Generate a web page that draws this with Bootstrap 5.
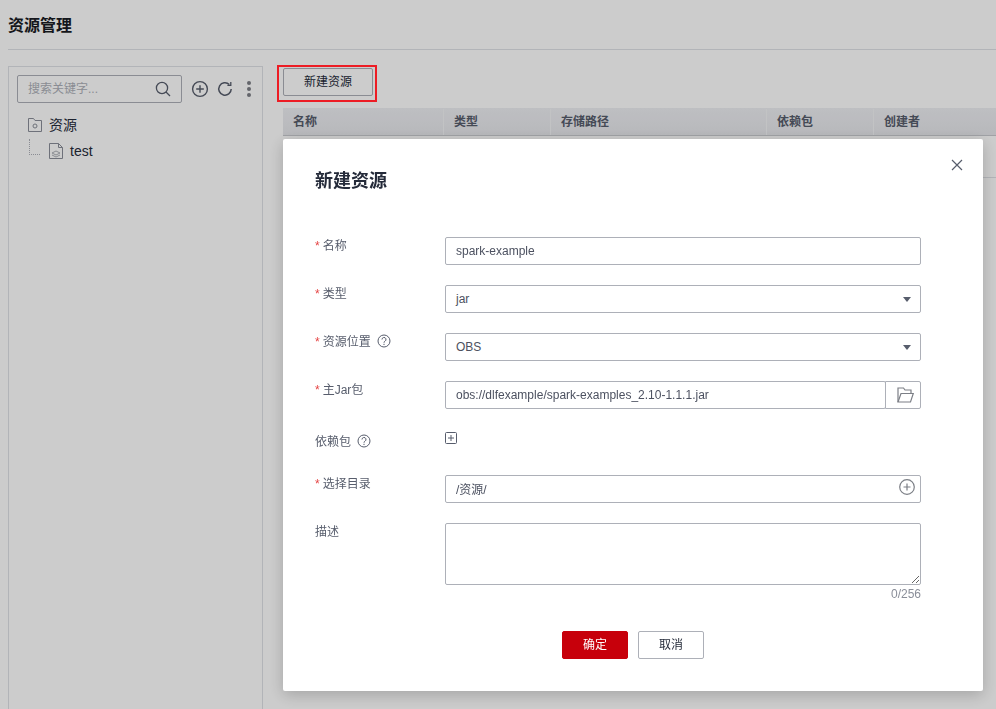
<!DOCTYPE html>
<html lang="zh">
<head>
<meta charset="utf-8">
<title>资源管理</title>
<link rel="stylesheet" href="https://cdn.jsdelivr.net/npm/bootstrap@5.3.0/dist/css/bootstrap.min.css">
<style>
html,body{height:100%;overflow:hidden}
body{font-family:"Liberation Sans","Noto Sans CJK SC",sans-serif;font-size:12px;color:#252b3a;background:#fff}
.page-wrap{padding:0 0 0 8px;height:709px;overflow:hidden}
.page-title{font-size:16px;font-weight:700;line-height:24px;margin:0;padding-top:14px;height:49px;color:#191c24}
.page-rule{height:1px;background:#dfe1e6;margin-bottom:16px}
.tree-panel{width:255px;height:700px;border:1px solid #dfe1e6;flex:none;padding:8px}
.search-box{width:165px;height:28px;border:1px solid #adb0b8;border-radius:2px;padding:0 10px;color:#adb0b8;line-height:26px}
.tree-row{font-size:14px;line-height:20px;color:#252b3a}
.tree-row-a{margin:12px 0 0 11px;gap:7px}
.tree-row-b{margin:6px 0 0 12px}
.tree-dots{width:11px;height:16px;border-left:1px dotted #adb0b8;border-bottom:1px dotted #adb0b8;margin:-8px 9px 0 0}
.doc-mark{margin-right:7px}
.main-area{padding:2px 0 0 20px;flex:1;min-width:0}
.ghost-btn{width:90px;height:28px;border:1px solid #adb0b8;border-radius:2px;background:#fff;font-size:12px;color:#252b3a;padding:0}
.head-row{height:28px;margin-top:12px;background:linear-gradient(#eeeff3,#e6e7eb);border-bottom:1px solid #c8cacf;font-weight:700;color:#575d6c;line-height:27px;padding-top:1px}
.head-cell{padding-left:10px;border-right:1px solid #f3f4f6;flex:none}
.data-row{height:42px;border-bottom:1px solid #dfe1e6}
.veil{position:fixed;inset:0;background:rgba(0,0,0,.2);z-index:10}
.mark-box{position:fixed;left:277px;top:65px;width:100px;height:37px;border:2px solid #ed1c24;z-index:20}
.dlg{position:fixed;left:283px;top:139px;width:700px;height:552px;background:#fff;border-radius:2px;box-shadow:0 4px 16px rgba(0,0,0,.2);z-index:30;padding:30px 62px 0 32px}
.dlg-title{font-size:18px;font-weight:700;line-height:24px;margin:0 0 44px;color:#252b3a}
.dlg-x{position:absolute;right:20px;top:20px;width:12px;height:12px;padding:0;border:0;background:none;display:flex}
.f-row{display:flex;margin-bottom:20px}
.f-label{width:130px;flex:none;line-height:18px;color:#575d6c}
.f-label-low{padding-top:4px}
.req{color:#e54545;margin-right:3px}
.f-input.form-control,.f-input.form-select{height:28px;min-height:28px;font-size:12px;color:#4c5160;border:1px solid #adb0b8;border-radius:2px;padding:0 10px;line-height:26px;box-shadow:none;background-color:#fff}
.f-input.form-select{background-image:none}
.f-input.f-dir{padding-bottom:2px}
.f-field{flex:1;position:relative;min-width:0}
.f-add{height:26px;padding-top:3px}
.caret-mark{position:absolute;right:10px;top:12px;width:0;height:0;border:4.5px solid transparent;border-top:5px solid #575d6c;border-bottom:0}
.in-icon{position:absolute;right:6px;top:4px;display:flex}
.folder-btn{flex:none;width:36px;justify-content:flex-end;padding-right:6px;margin-left:-1px;display:flex;align-items:center;border:1px solid #adb0b8;border-radius:0 2px 2px 0;background:#fff;height:28px}
.f-area.form-control{height:62px;border:1px solid #adb0b8;border-radius:2px;font-size:12px;box-shadow:none}
.count-note{text-align:right;color:#8a8e99;line-height:18px;margin:0;font-size:12px}
.f-row-last{margin-bottom:0}
.foot-row{display:flex;justify-content:center;gap:10px;margin-top:28px;padding-left:30px}
.ok-btn,.no-btn{width:66px;height:28px;border-radius:2px;font-size:12px;padding:0;line-height:26px}
.ok-btn.btn{background:#c7000b;border:1px solid #c7000b;color:#fff}
.no-btn.btn{background:#fff;border:1px solid #adb0b8;color:#252b3a}
.help-mark{margin-left:6px;vertical-align:-2px}
.plus-mark{margin-left:9px}
.refresh-mark{margin-left:8px}
.kebab-mark{margin-left:13px}
</style>
</head>
<body>
<div class="page-wrap">
  <h1 class="page-title">资源管理</h1>
  <div class="page-rule"></div>
  <div class="d-flex">
    <aside class="tree-panel">
      <div class="d-flex align-items-center">
        <div class="search-box d-flex align-items-center justify-content-between">
          <span>搜索关键字...</span>
          <svg width="16" height="16" viewBox="0 0 16 16" fill="none" stroke="#575d6c" stroke-width="1.3"><circle cx="7" cy="7" r="5.6"/><path d="M11 11l4 4"/></svg>
        </div>
        <svg class="plus-mark" width="18" height="18" viewBox="0 0 18 18" fill="none" stroke="#575d6c" stroke-width="1.4"><circle cx="9" cy="9" r="7.4"/><path d="M5.2 9h7.600M9 5.200v7.600"/></svg>
        <svg class="refresh-mark" width="16" height="16" viewBox="0 0 16 16" fill="none" stroke="#575d6c" stroke-width="1.5"><path d="M14.2 8a6.2 6.2 0 1 1-1.9-4.5"/><path d="M13.8.9v3.4h-3.4" stroke-width="1.3"/></svg>
        <svg class="kebab-mark" width="6" height="18" viewBox="0 0 6 18" fill="#7c7f86"><circle cx="3" cy="3" r="2"/><circle cx="3" cy="9" r="2"/><circle cx="3" cy="15" r="2"/></svg>
      </div>
      <div class="tree-row tree-row-a d-flex align-items-center">
        <svg width="14" height="14" viewBox="0 0 14 14" fill="none" stroke="#8a8e99"><path d="M.5 13.5V.5h5l1.5 2h6.500v11z"/><circle cx="7" cy="8" r="2"/></svg>
        <span>资源</span>
      </div>
      <div class="tree-row tree-row-b d-flex align-items-center">
        <span class="tree-dots"></span>
        <svg class="doc-mark" width="14" height="16" viewBox="0 0 14 16" fill="none" stroke="#8a8e99"><path d="M.5.500h9l4 4v11H.5z"/><path d="M9.500.5v4h4"/><path d="M3 10l4-2 4 2-4 2zM3 12l4 2 4-2" stroke="#adb0b8"/></svg>
        <span>test</span>
      </div>
    </aside>
    <main class="main-area">
      <button class="ghost-btn" type="button">新建资源</button>
      <div class="head-row d-flex">
        <div class="head-cell" style="width:161px">名称</div>
        <div class="head-cell" style="width:107px">类型</div>
        <div class="head-cell" style="width:216px">存储路径</div>
        <div class="head-cell" style="width:107px">依赖包</div>
        <div class="head-cell border-0" style="width:122px">创建者</div>
      </div>
      <div class="data-row"></div>
    </main>
  </div>
</div>

<div class="veil"></div>
<div class="mark-box"></div>

<div class="dlg">
  <button class="dlg-x" type="button" aria-label="关闭">
    <svg width="12" height="12" viewBox="0 0 12 12" stroke="#575d6c" stroke-width="1.200"><path d="M1 1l10 10M11 1L1 11"/></svg>
  </button>
  <h2 class="dlg-title">新建资源</h2>
  <form>
    <div class="f-row">
      <div class="f-label"><span class="req">*</span>名称</div>
      <div class="f-field"><input class="form-control f-input" value="spark-example"></div>
    </div>
    <div class="f-row">
      <div class="f-label"><span class="req">*</span>类型</div>
      <div class="f-field"><div class="form-select f-input">jar</div><span class="caret-mark"></span></div>
    </div>
    <div class="f-row">
      <div class="f-label"><span class="req">*</span>资源位置<svg class="help-mark" width="14" height="14" viewBox="0 0 14 14" fill="none" stroke="#575d6c"><circle cx="7" cy="7" r="6"/><path d="M5 5.500a2 2 0 1 1 3 1.700c-.7.400-1 .800-1 1.500"/><path d="M7 9.800v1.200"/></svg></div>
      <div class="f-field"><div class="form-select f-input">OBS</div><span class="caret-mark"></span></div>
    </div>
    <div class="f-row">
      <div class="f-label"><span class="req">*</span>主Jar包</div>
      <div class="f-field d-flex">
        <input class="form-control f-input flex-grow-1" value="obs://dlfexample/spark-examples_2.10-1.1.1.jar">
        <span class="folder-btn">
          <svg width="17" height="16" viewBox="0 0 17 16" fill="none" stroke="#7c7f86" stroke-width="1.200"><path d="M1 15V1h5.500l1.500 2h6v3.500"/><path d="M1 15l3-8.500h12.300L13.500 15z"/></svg>
        </span>
      </div>
    </div>
    <div class="f-row">
      <div class="f-label f-label-low">依赖包<svg class="help-mark" width="14" height="14" viewBox="0 0 14 14" fill="none" stroke="#575d6c"><circle cx="7" cy="7" r="6"/><path d="M5 5.500a2 2 0 1 1 3 1.700c-.7.400-1 .800-1 1.500"/><path d="M7 9.800v1.200"/></svg></div>
      <div class="f-field f-add">
        <svg class="d-block" width="12" height="12" viewBox="0 0 12 12" fill="none" stroke="#575d6c"><rect x=".5" y=".5" width="11" height="11" rx="1"/><path d="M3 6h6M6 3v6"/></svg>
      </div>
    </div>
    <div class="f-row">
      <div class="f-label"><span class="req">*</span>选择目录</div>
      <div class="f-field"><input class="form-control f-input f-dir" value="/资源/">
        <span class="in-icon"><svg width="16" height="16" viewBox="0 0 16 16" fill="none" stroke="#7c7f86" stroke-width="1.200"><circle cx="8" cy="8" r="7.300"/><path d="M4.500 8h7M8 4.500v7"/></svg></span>
      </div>
    </div>
    <div class="f-row f-row-last">
      <div class="f-label">描述</div>
      <div class="f-field">
        <textarea class="form-control f-area"></textarea>
        <p class="count-note">0/256</p>
      </div>
    </div>
    <div class="foot-row">
      <button class="btn ok-btn" type="button">确定</button>
      <button class="btn no-btn" type="button">取消</button>
    </div>
  </form>
</div>
<script src="https://cdn.jsdelivr.net/npm/bootstrap@5.3.0/dist/js/bootstrap.bundle.min.js"></script>
</body>
</html>
